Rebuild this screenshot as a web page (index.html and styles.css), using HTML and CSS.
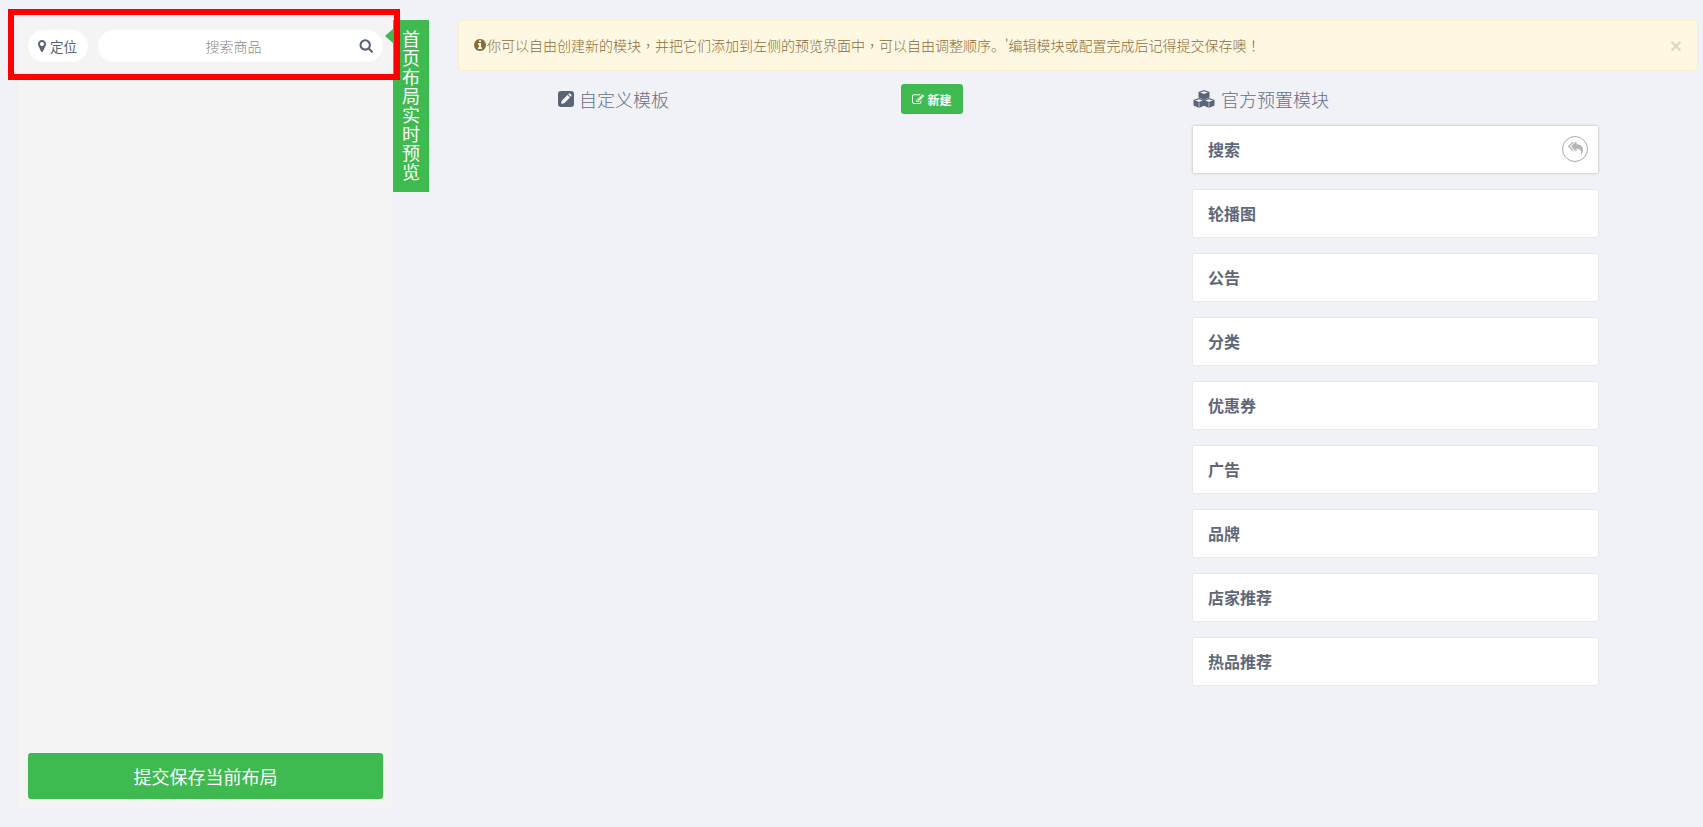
FILE: index.html
```html
<!DOCTYPE html>
<html lang="zh">
<head>
<meta charset="utf-8">
<title>首页布局</title>
<link rel="stylesheet" href="styles.css">
</head>
<body>
<div class="page">
  <section class="preview">
    <div class="preview-head">
      <div class="locate">
        <svg class="ic-marker" viewBox="384 128 1024 1536"><path d="M1152 640q0-106-75-181t-181-75-181 75-75 181 75 181 181 75 181-75 75-181zm256 0q0 109-33 179l-364 774q-16 33-47.500 52t-67.500 19-67.500-19-46.500-52l-365-774q-33-70-33-179 0-212 150-362t362-150 362 150 150 362z"/></svg>
        <span>定位</span>
      </div>
      <div class="search">
        <span class="search-text">搜索商品</span>
        <svg class="ic-search" viewBox="0 128 1728 1664"><path d="M1216 832q0-185-131.500-316.500t-316.500-131.500-316.500 131.500-131.500 316.500 131.500 316.500 316.500 131.500 316.500-131.500 131.500-316.500zm512 832q0 52-38 90t-90 38q-54 0-90-38l-343-342q-179 124-399 124-143 0-273.500-55.500t-225-150-150-225-55.500-273.500 55.500-273.500 150-225 225-150 273.500-55.500 273.500 55.500 225 150 150 225 55.500 273.500q0 220-124 399l343 343q37 37 37 90z"/></svg>
      </div>
    </div>
    <button class="submit">提交保存当前布局</button>
    <div class="annotation"></div>
  </section>
  <aside class="preview-label">首页布局实时预览</aside>
  <main class="main">
    <div class="alert">
      <p class="alert-text"><svg class="ic-info" viewBox="128 128 1536 1536"><path d="M1152 1376v-160q0-14-9-23t-23-9h-96v-512q0-14-9-23t-23-9h-320q-14 0-23 9t-9 23v160q0 14 9 23t23 9h96v320h-96q-14 0-23 9t-9 23v160q0 14 9 23t23 9h448q14 0 23-9t9-23zm-128-896v-160q0-14-9-23t-23-9h-192q-14 0-23 9t-9 23v160q0 14 9 23t23 9h192q14 0 23-9t9-23zm640 416q0 209-103 385.500t-279.500 279.500-385.500 103-385.500-103-279.500-279.500-103-385.500 103-385.500 279.500-279.500 385.500-103 385.500 103 279.500 279.500 103 385.500z"/></svg><span>你可以自由创建新的模块<span class="punct" lang="zh-Hant">，</span>并把它们添加到左侧的预览界面中<span class="punct" lang="zh-Hant">，</span>可以自由调整顺序。'编辑模块或配置完成后记得提交保存噢<span class="punct" lang="zh-Hant">！</span></span></p>
      <span class="close">×</span>
    </div>
    <div class="columns">
      <div class="templates">
        <h3 class="heading">
          <svg class="ic-edit" viewBox="0 0 16 16"><rect width="16" height="16" rx="3" class="edit-bg"/><path class="edit-pen" d="M3.200 12.800l.6-3 5.800-5.800 2.400 2.400-5.800 5.800zM10.300 3.300l.7-.7q.5-.5 1 0l1.400 1.400q.5.5 0 1l-.7.7z"/></svg>
          <span>自定义模板</span>
        </h3>
        <button class="new-btn">
          <svg class="ic-new" viewBox="0 128 1792 1536"><path d="M888 1184l116-116-152-152-116 116v56h96v96h56zm440-720q-16-16-33 1l-350 350q-17 17-1 33t33-1l350-350q17-17 1-33zm80 594v190q0 119-84.500 203.500t-203.500 84.500h-832q-119 0-203.500-84.500t-84.500-203.500v-832q0-119 84.500-203.500t203.500-84.500h832q63 0 117 25 15 7 18 23 3 17-9 29l-49 49q-14 14-32 8-23-6-45-6h-832q-66 0-113 47t-47 113v832q0 66 47 113t113 47h832q66 0 113-47t47-113v-126q0-13 9-22l64-64q15-15 35-7t20 29zm-96-738l288 288-672 672h-288v-288zm444 132l-92 92-288-288 92-92q28-28 68-28t68 28l152 152q28 28 28 68t-28 68z"/></svg>
          <span>新建</span>
        </button>
      </div>
      <div class="modules">
        <h3 class="heading heading-modules">
          <svg class="ic-cubes" viewBox="0 0 22 18">
            <g class="cube"><path d="M11 0l5.500 2v5.500L11 9.800 5.500 7.500V2z"/><path class="cube-top" d="M11 1.200l3.800 1.300L11 3.900 7.200 2.500z"/></g>
            <g class="cube"><path d="M6 8l5.500 2v5.500L6 18 .5 15.500V10z"/><path class="cube-top" d="M6 9.200l3.800 1.300L6 11.900 2.200 10.500z"/><path class="cube-line" d="M5.700 12.400h.6V18h-.6z"/></g>
            <g class="cube"><path d="M16 8l5.500 2v5.500L16 18l-5.500-2.500V10z"/><path class="cube-top" d="M16 9.200l3.800 1.300L16 11.900l-3.800-1.400z"/><path class="cube-line" d="M15.700 12.400h.6V18h-.6z"/></g>
          </svg>
          <span>官方预置模块</span>
        </h3>
        <ul class="module-list">
          <li class="module module-active">
            <span>搜索</span>
            <span class="reply"><svg class="ic-reply" viewBox="0 128 1792 1536"><path d="M640 1082v70q0 42-39 59-13 5-25 5-27 0-45-19l-512-512q-19-19-19-45t19-45l512-512q29-31 70-14 39 17 39 59v69l-397 398q-19 19-19 45t19 45zm1152 38q0 58-17 133.500t-38.500 138-48 125-40.500 90.500l-20 40q-8 17-28 17-6 0-9-1-25-8-23-34 43-400-106-565-64-71-170.500-110.500t-267.500-52.500v251q0 42-39 59-13 5-25 5-27 0-45-19l-512-512q-19-19-19-45t19-45l512-512q29-31 70-14 39 17 39 59v262q411 28 599 221 169 173 169 509z"/></svg></span>
          </li>
          <li class="module"><span>轮播图</span></li>
          <li class="module"><span>公告</span></li>
          <li class="module"><span>分类</span></li>
          <li class="module"><span>优惠券</span></li>
          <li class="module"><span>广告</span></li>
          <li class="module"><span>品牌</span></li>
          <li class="module"><span>店家推荐</span></li>
          <li class="module"><span>热品推荐</span></li>
        </ul>
      </div>
    </div>
  </main>
</div>
</body>
</html>
```
FILE: styles.css
```css
* { box-sizing: border-box; }
html, body { margin: 0; height: 100%; overflow: hidden; }
body {
  background: #f0f2f7;
  font-family: "Noto Sans CJK SC", "Liberation Sans", sans-serif;
  color: #5a6478;
  font-size: 14px;
}
h3, p, ul { margin: 0; padding: 0; }
ul { list-style: none; }
button { font-family: inherit; border: 0; cursor: pointer; }
svg { display: block; fill: currentColor; flex: none; }

.page {
  display: flex;
  align-items: flex-start;
  padding: 20px 5px 0 18px;
}

/* preview */
.preview {
  position: relative;
  width: 375px;
  height: 789px;
  padding: 10px;
  background: #f4f4f4;
  display: flex;
  flex-direction: column;
  justify-content: space-between;
  flex: none;
}
.preview::after {
  content: "";
  position: absolute;
  right: 0;
  top: 9px;
  border: 7px solid transparent;
  border-left: 0;
  border-right: 8px solid #3eba50;
}
.preview-head { display: flex; gap: 10px; height: 32px; }
.locate {
  width: 60px;
  background: #fff;
  border-radius: 16px;
  display: flex;
  align-items: center;
  justify-content: center;
  gap: 4px;
  line-height: 32px;
  font-size: 13.500px;
  padding-right: 1px;
}
.ic-marker { width: 8px; height: 12px; }
.search {
  flex: 1;
  background: #fff;
  border-radius: 16px;
  display: flex;
  align-items: center;
  padding: 0 10px 0 0;
  position: relative;
}
.search-text {
  flex: 1;
  text-align: center;
  color: #8a8a8a;
  line-height: 32px;
  padding-left: 10px;
  font-weight: 300;
}
.ic-search { width: 14px; height: 14px; }
.submit {
  height: 46px;
  background: #3eba50;
  color: #fff;
  font-size: 18px;
  font-weight: 400;
  border-radius: 3px;
  width: 100%;
}
.annotation {
  position: absolute;
  left: -10px;
  top: -11px;
  width: 392px;
  height: 71px;
  border: 6px solid #f00;
  z-index: 2;
}
.preview-label {
  width: 36px;
  height: 172px;
  flex: none;
  background: #3eba50;
  color: #fff;
  font-size: 18px;
  font-weight: 400;
  line-height: 19px;
  padding: 9px 9px;
  text-align: center;
}

/* main */
.main { flex: 1; margin-left: 29px; min-width: 0; }
.alert {
  height: 51px;
  background: #fef7e1;
  border: 1px solid #fdeccd;
  border-radius: 4px;
  padding: 0 15px;
  color: #8a6d3b;
  display: flex;
  align-items: center;
  justify-content: space-between;
  font-weight: 300;
}
.alert-text { display: flex; align-items: center; white-space: nowrap; margin-bottom: 2px; }
.punct { font-family: "Noto Sans CJK TC", sans-serif; }
.ic-info { width: 12px; height: 12px; margin-right: 1px; }
.close {
  font-family: "Liberation Sans", sans-serif;
  font-size: 21px;
  font-weight: 700;
  line-height: 1;
  color: rgba(0, 0, 0, .15);
}
.columns { display: flex; margin-top: 13px; }
.templates {
  width: 505px;
  padding-left: 100px;
  margin-right: 230px;
  display: flex;
  justify-content: space-between;
  align-items: flex-start;
}
.heading {
  display: flex;
  align-items: center;
  gap: 5px;
  height: 30px;
  font-size: 18px;
  font-weight: 300;
  line-height: 30px;
  color: #656f82;
}
.ic-edit { width: 16px; height: 16px; }
.edit-bg { fill: #5a6478; }
.edit-pen { fill: #fff; }
.new-btn {
  width: 62px;
  height: 30px;
  background: #3eba50;
  color: #fff;
  border-radius: 3px;
  font-size: 12px;
  font-weight: 700;
  display: flex;
  align-items: center;
  justify-content: center;
  gap: 3px;
  padding: 0;
}
.ic-new { width: 12px; height: 11px; }
.modules { width: 405px; }
.heading-modules { gap: 6px; }
.ic-cubes { width: 22px; height: 18px; }
.cube { fill: #5a6478; }
.cube-top { fill: #f0f2f7; }
.cube-line { fill: #f0f2f7; }
.module-list { display: flex; flex-direction: column; gap: 17px; margin-top: 12px; }
.module {
  height: 47px;
  background: #fff;
  border-radius: 1px;
  box-shadow: 0 0 2px rgba(0, 0, 0, .14);
  padding: 0 10px 2px 15px;
  display: flex;
  align-items: center;
  justify-content: space-between;
  font-size: 16px;
  font-weight: 700;
  color: #5f6878;
}
.module-active { box-shadow: 0 0 3px rgba(0, 0, 0, .28); }
.reply {
  width: 26px;
  height: 26px;
  border: 1px solid #aaa;
  border-radius: 50%;
  display: flex;
  align-items: center;
  justify-content: center;
  color: #b5b5b5;
}
.ic-reply { width: 15px; height: 13px; }
```
